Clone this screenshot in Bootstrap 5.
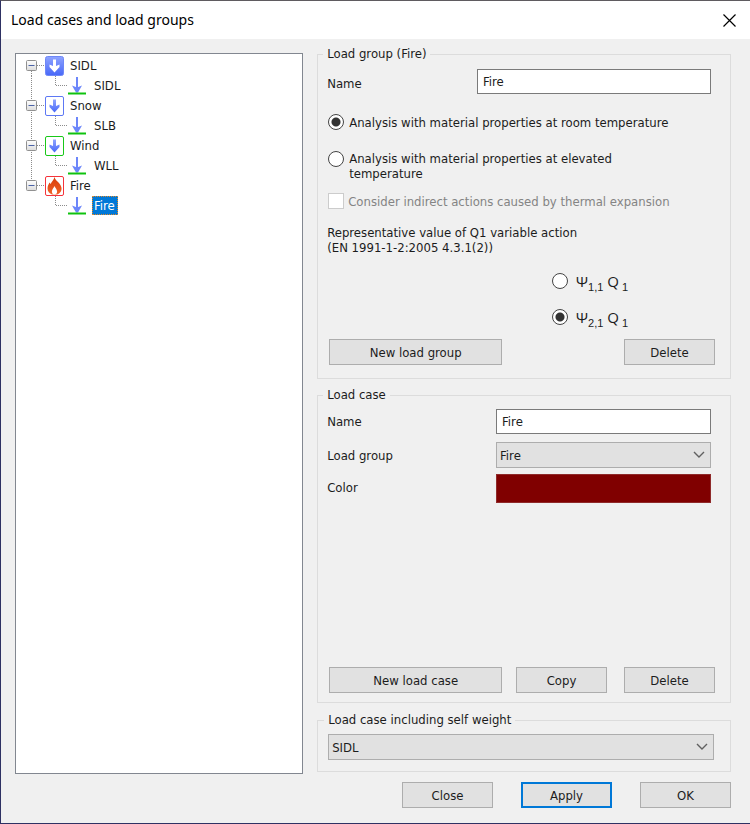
<!DOCTYPE html>
<html lang="en">
<head>
<meta charset="utf-8">
<meta name="viewport" content="width=device-width, initial-scale=1">
<title>Load cases and load groups</title>
<link href="https://cdn.jsdelivr.net/npm/bootstrap@5.3.0/dist/css/bootstrap.min.css" rel="stylesheet">
<style>
  body { font: 13px/15px "DejaVu Sans Condensed", "DejaVu Sans", sans-serif; color: #1c1c1c; background: #f0f0f0; }
  .dialog { border: 1px solid #2e3163; border-right: 0; border-top-color: #5f5b60; }
  .titlebar { height: 38px; padding: 0 14px 0 10px; background: #fff; }
  .titlebar h1 { font: 14px/20px "Noto Sans", "Open Sans", sans-serif; color: #000; }
  .titlebar button { line-height: 0; }
  .content { padding: 6px 19px 0 14px; gap: 14px; }
  .tree-pane { flex: 287 1 0; min-width: 0; margin-top: 8px; padding: 2px 0; border: 1px solid #828790; background: #fff; }
  .form-pane { flex: 415 1 0; min-width: 0; margin-bottom: 2px; }

  .tree-row { height: 20px; }
  .tree-row svg { display: block; flex: none; }
  .dots { stroke: #8c8c8c; stroke-dasharray: 1 1; fill: none; }
  .expander { width: 29px; height: 20px; }
  .node-label { padding: 0 0 2px 5px; }
  .leaf-label { margin: 0 0 2px 6px; padding: 0 2px; line-height: 17px; }
  .leaf-label.selected { padding: 0 2px 0 1px; border: 1px dotted #e08a2c; background: #0078d7; color: #fff; }

  .group-box { border: 1px solid #dcdcdc; padding: 0 15px 0 9px; }
  .group-box > legend { float: none; width: auto; margin: 0 0 0 -4px; padding: 0 4px; font-size: 13px; line-height: 18px; }
  .box-top { padding-bottom: 13px; }
  .box-middle { margin-top: 7px; padding-bottom: 9px; }
  .box-bottom { margin-top: 8px; padding: 0 16px 11px 10px; }

  .field { padding-right: 4px; }
  .field label, .field .caption { flex: 1 1 0; }
  .box-top .field label { padding-top: 4px; }
  .field .caption { padding-bottom: 3px; }
  .field .wide { flex: 0 0 61%; }
  .field .narrow { flex: 0 0 56%; }
  .box { min-width: 0; border-radius: 0; font-size: 13px; line-height: 15px; color: #1c1c1c; }
  input.box { height: 25px; padding: 4px 5px; border: 1px solid #7a7a7a; }
  select.box { height: 26px; padding: 4px 24px 4px 3px; border: 1px solid #adadad; background-color: #e1e1e1; background-position: right 5px center; background-size: 12px 8px;
    background-image: url("data:image/svg+xml,%3Csvg xmlns='http://www.w3.org/2000/svg' viewBox='0 0 12 8'%3E%3Cpath d='M1 1l5 5 5-5' fill='none' stroke='%23606060' stroke-width='1.4'/%3E%3C/svg%3E"); }
  .swatch { height: 29px; padding: 0; background: #800000; border: 1px solid #8f2a2a; }

  .choice { gap: 5px; padding-left: 1px; }
  .choice input { flex: none; width: 16px; height: 16px; margin: 0; appearance: none; background: #fff; border: 1px solid #444; }
  .choice input[type=radio] { border-radius: 50%; }
  .choice input[type=radio]:checked { background: radial-gradient(circle, #333 0 4px, #fff 5px); }
  .choice input:disabled { border-color: #ccc; }
  .choice input:disabled + label { color: #848484; }
  .tick { gap: 4px; }
  .psi-list { margin: 18px 0 14px 58%; }
  .psi-list .choice { height: 16px; gap: 8px; padding-left: 0; }
  .psi-list label { font: 15px/16px "Open Sans", "Noto Sans", sans-serif; }
  .psi-list sub { font: 11px/1px "Liberation Sans", Arial, sans-serif; bottom: -4px; }

  .push { height: 26px; padding: 0; border: 1px solid #adadad; border-radius: 0; background: #e1e1e1; color: #1c1c1c; font-size: 13px; line-height: 15px; flex: 0 1 91px; }
  .push:hover { background: #e5f1fb; border-color: #0078d7; color: #1c1c1c; }
  .push.big { flex-basis: 173px; }
  .push.default { border: 2px solid #0078d7; }
  .push-row { padding-left: 2px; }
  .push-row .last { margin-left: 17px; }
  .footer { padding: 8px 19px 15px; gap: 28px; }

  .mt-gap5 { margin-top: 5px; }
  .mt-gap6 { margin-top: 6px; }
  .mt-gap8 { margin-top: 8px; }
  .mt-gap12 { margin-top: 12px; }
  .mt-gap16 { margin-top: 16px; }
  .mt-gap20 { margin-top: 20px; }
  .mt-gap21 { margin-top: 21px; }
</style>
<script src="https://cdn.jsdelivr.net/npm/bootstrap@5.3.0/dist/js/bootstrap.bundle.min.js"></script>
</head>
<body>
<svg class="position-absolute" width="0" height="0" aria-hidden="true">
  <defs>
    <linearGradient id="blue" x1="0" y1="0" x2="0" y2="1"><stop offset="0" stop-color="#8fa4ff"/><stop offset="1" stop-color="#4868f8"/></linearGradient>
    <linearGradient id="boxface" x1="0" y1="0" x2="0" y2="1"><stop offset="0" stop-color="#fff"/><stop offset="1" stop-color="#dcdcdc"/></linearGradient>
    <linearGradient id="flame" x1="0" y1="0" x2="0" y2="1"><stop offset="0" stop-color="#d83c08"/><stop offset="1" stop-color="#f06428"/></linearGradient>
    <symbol id="minus" viewBox="0 0 11 11"><rect x=".5" y=".5" width="10" height="10" rx="1" fill="url(#boxface)" stroke="#919191"/><path d="M2.500 5.500h6" stroke="#4b63a7"/></symbol>
    <symbol id="arrow" viewBox="0 0 20 20"><path d="M8.500 3.500h3v6.500l3.500-1.500v2.500L10 16.500 5 11V8.500L8.500 10z"/></symbol>
    <symbol id="load" viewBox="0 0 18 20"><path d="M9 1v12" stroke="#6c86fa" stroke-width="2"/><path d="M4 9.500l5 2 5-2-4 7H8z" fill="#6c86fa"/><path d="M0 17.500h18" stroke="#0fc20f" stroke-width="2"/></symbol>
  </defs>
</svg>

<div class="dialog d-flex flex-column min-vh-100">
  <header class="titlebar d-flex align-items-center justify-content-between">
    <h1 class="m-0">Load cases and load groups</h1>
    <button type="button" class="border-0 bg-transparent p-0" aria-label="Close window">
      <svg width="13" height="13" viewBox="0 0 13 13"><path d="M.5.500l12 12M12.500.500l-12 12" stroke="#000" stroke-width="1.200"/></svg>
    </button>
  </header>

  <main class="content d-flex flex-grow-1">
    <nav class="tree-pane" aria-label="Load groups">
      <ul class="list-unstyled m-0">
        <li>
          <div class="tree-row d-flex align-items-center">
            <button type="button" class="expander border-0 bg-transparent p-0" aria-label="Collapse SIDL"><svg width="29" height="20"><path class="dots" d="M15.500 15v5M21 9.500h8"/><use href="#minus" x="10" y="4" width="11" height="11"/></svg></button>
            <svg width="20" height="20"><rect x=".5" y=".5" width="18" height="19" rx="2" fill="url(#blue)" stroke="#6f88f8"/><use href="#arrow" x="-.5" width="20" height="20" fill="#fff"/></svg>
            <span class="node-label">SIDL</span>
          </div>
          <ul class="list-unstyled m-0"><li class="tree-row d-flex align-items-center">
            <svg width="52" height="20"><path class="dots" d="M15.500 0v20M39.500 0v9.500H52"/></svg>
            <svg width="18" height="20"><use href="#load" width="18" height="20"/></svg>
            <span class="leaf-label">SIDL</span>
          </li></ul>
        </li>
        <li>
          <div class="tree-row d-flex align-items-center">
            <button type="button" class="expander border-0 bg-transparent p-0" aria-label="Collapse Snow"><svg width="29" height="20"><path class="dots" d="M15.500 0v20M21 9.500h8"/><use href="#minus" x="10" y="4" width="11" height="11"/></svg></button>
            <svg width="20" height="20"><rect x=".5" y=".5" width="18" height="19" rx="1.500" fill="#fff" stroke="#5d78f4"/><use href="#arrow" x="-.5" width="20" height="20" fill="url(#blue)"/></svg>
            <span class="node-label">Snow</span>
          </div>
          <ul class="list-unstyled m-0"><li class="tree-row d-flex align-items-center">
            <svg width="52" height="20"><path class="dots" d="M15.500 0v20M39.500 0v9.500H52"/></svg>
            <svg width="18" height="20"><use href="#load" width="18" height="20"/></svg>
            <span class="leaf-label">SLB</span>
          </li></ul>
        </li>
        <li>
          <div class="tree-row d-flex align-items-center">
            <button type="button" class="expander border-0 bg-transparent p-0" aria-label="Collapse Wind"><svg width="29" height="20"><path class="dots" d="M15.500 0v20M21 9.500h8"/><use href="#minus" x="10" y="4" width="11" height="11"/></svg></button>
            <svg width="20" height="20"><rect x=".5" y=".5" width="18" height="19" rx="1.500" fill="#fff" stroke="#19c819"/><use href="#arrow" x="-.5" width="20" height="20" fill="url(#blue)"/></svg>
            <span class="node-label">Wind</span>
          </div>
          <ul class="list-unstyled m-0"><li class="tree-row d-flex align-items-center">
            <svg width="52" height="20"><path class="dots" d="M15.500 0v20M39.500 0v9.500H52"/></svg>
            <svg width="18" height="20"><use href="#load" width="18" height="20"/></svg>
            <span class="leaf-label">WLL</span>
          </li></ul>
        </li>
        <li>
          <div class="tree-row d-flex align-items-center">
            <button type="button" class="expander border-0 bg-transparent p-0" aria-label="Collapse Fire"><svg width="29" height="20"><path class="dots" d="M15.500 0v5M21 9.500h8"/><use href="#minus" x="10" y="4" width="11" height="11"/></svg></button>
            <svg width="20" height="20"><rect x=".5" y=".5" width="18" height="19" rx="1.500" fill="#fff" stroke="#f5333b"/><path d="M9.500 1C10 4 12 4.500 14 7c2.500 3 3.500 6 1.500 9-.8 1.300-2 2-3.300 2.500H7C4.500 17.500 2.500 15.500 2.500 12.500c0-2.500 1-4 2-6l1.200 1.500C6.500 5.500 9 4 9.500 1z" fill="url(#flame)"/><path d="M9.500 10c.5 1.500 2.600 3.300 2.600 5.500 0 1.700-1 3-2.600 3s-2.600-1.300-2.600-3c0-2.200 2.100-4 2.600-5.500z" fill="#fff"/></svg>
            <span class="node-label">Fire</span>
          </div>
          <ul class="list-unstyled m-0"><li class="tree-row d-flex align-items-center">
            <svg width="52" height="20"><path class="dots" d="M39.500 0v9.500H52"/></svg>
            <svg width="18" height="20"><use href="#load" width="18" height="20"/></svg>
            <span class="leaf-label selected">Fire</span>
          </li></ul>
        </li>
      </ul>
    </nav>

    <form class="form-pane d-flex flex-column">
      <fieldset class="group-box box-top">
        <legend>Load group (Fire)</legend>
        <div class="field d-flex align-items-center mt-gap6">
          <label for="groupName">Name</label>
          <input id="groupName" type="text" class="form-control box wide" value="Fire">
        </div>
        <div class="choice d-flex align-items-center mt-gap20">
          <input type="radio" name="analysis" id="room" checked>
          <label for="room">Analysis with material properties at room temperature</label>
        </div>
        <div class="choice d-flex align-items-start mt-gap21">
          <input type="radio" name="analysis" id="elevated">
          <label for="elevated">Analysis with material properties at elevated<br>temperature</label>
        </div>
        <div class="choice tick d-flex align-items-center mt-gap12">
          <input type="checkbox" id="indirect" disabled>
          <label for="indirect">Consider indirect actions caused by thermal expansion</label>
        </div>
        <p class="mb-0 mt-gap16">Representative value of Q1 variable action<br>(EN 1991-1-2:2005 4.3.1(2))</p>
        <div class="psi-list">
          <div class="choice d-flex align-items-center">
            <input type="radio" name="psi" id="psi1">
            <label for="psi1">Ψ<sub>1,1</sub> Q<sub> 1</sub></label>
          </div>
          <div class="choice d-flex align-items-center mt-gap20">
            <input type="radio" name="psi" id="psi2" checked>
            <label for="psi2">Ψ<sub>2,1</sub> Q<sub> 1</sub></label>
          </div>
        </div>
        <div class="push-row d-flex justify-content-between">
          <button type="button" class="btn push big">New load group</button>
          <button type="button" class="btn push">Delete</button>
        </div>
      </fieldset>

      <fieldset class="group-box box-middle d-flex flex-column flex-grow-1">
        <legend>Load case</legend>
        <div class="field d-flex align-items-center mt-gap5">
          <label for="caseName">Name</label>
          <input id="caseName" type="text" class="form-control box narrow" value="Fire">
        </div>
        <div class="field d-flex align-items-center mt-gap8">
          <label for="caseGroup">Load group</label>
          <select id="caseGroup" class="form-select box narrow"><option>SIDL</option><option>Snow</option><option>Wind</option><option selected>Fire</option></select>
        </div>
        <div class="field d-flex align-items-center mt-gap6">
          <span class="caption">Color</span>
          <button type="button" class="swatch narrow" aria-label="Color"></button>
        </div>
        <div class="push-row d-flex mt-auto">
          <button type="button" class="btn push big">New load case</button>
          <button type="button" class="btn push ms-auto">Copy</button>
          <button type="button" class="btn push last">Delete</button>
        </div>
      </fieldset>

      <fieldset class="group-box box-bottom">
        <legend>Load case including self weight</legend>
        <select class="form-select box mt-gap5" aria-label="Load case including self weight"><option selected>SIDL</option><option>SLB</option><option>WLL</option><option>Fire</option></select>
      </fieldset>
    </form>
  </main>

  <footer class="footer d-flex justify-content-end">
    <button type="button" class="btn push">Close</button>
    <button type="button" class="btn push default">Apply</button>
    <button type="button" class="btn push">OK</button>
  </footer>
</div>
</body>
</html>
